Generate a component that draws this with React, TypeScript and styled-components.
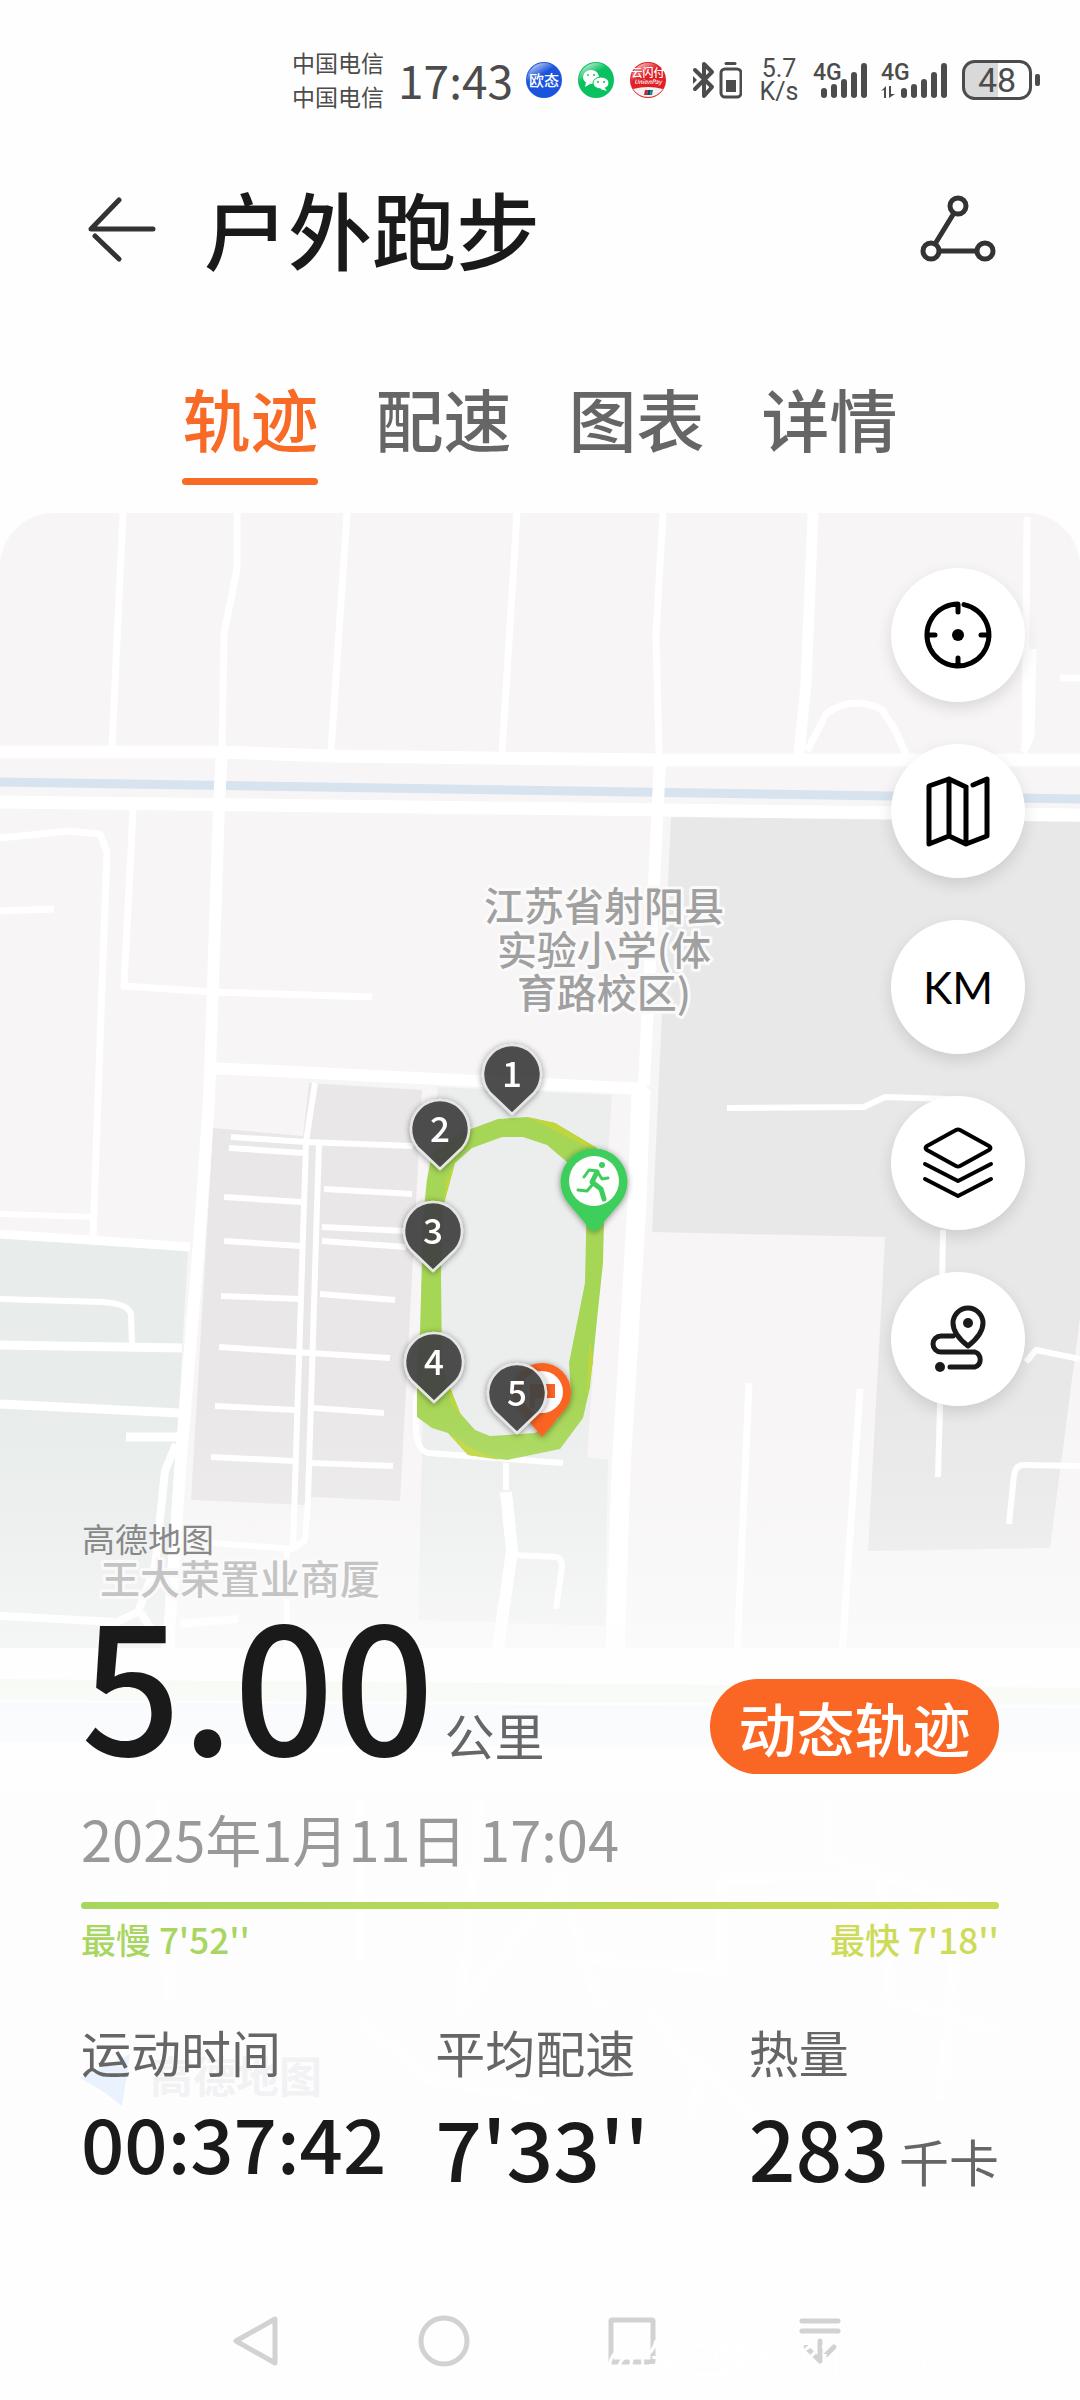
import React from "react";
import styled, { createGlobalStyle } from "styled-components";

const GlobalStyle = createGlobalStyle`
  *, *::before, *::after { box-sizing: border-box; }
  html, body { margin: 0; background: #fefefe; }
  body { font-family: "Noto Sans CJK SC", "Noto Sans", sans-serif; color: #1a1a1a; }
  button { border: 0; padding: 0; background: none; font: inherit; color: inherit; cursor: pointer; }
  svg { display: block; }
  h1, p, dl, dd, dt { margin: 0; font-weight: inherit; }
`;

const Page = styled.div`
  min-height: 100vh;
  display: flex;
  flex-direction: column;
`;

/* ---------- status bar ---------- */

const StatusBar = styled.div`
  height: 160px;
  padding-right: 40px;
  display: flex;
  align-items: center;
  justify-content: flex-end;
  color: #4c4c4c;
`;

const Carriers = styled.div`
  font-size: 23px;
  line-height: 34px;
  font-weight: 400;
  margin-right: 14px;
  padding-bottom: 2px;
`;

const Clock = styled.time`
  font-size: 46px;
  line-height: 48px;
  font-weight: 400;
  margin-right: 13px;
  padding-bottom: 2px;
`;

const Notices = styled.div`
  display: flex;
  gap: 16px;
  margin-right: 26px;
  svg {
    overflow: visible;
  }
`;

const Speed = styled.div`
  width: 40px;
  margin: 0 14px 0 17px;
  text-align: center;
  font: 400 25px/23px Roboto, sans-serif;
`;

const Signals = styled.div`
  display: flex;
  gap: 14px;
  margin-right: 15px;
`;

/* ---------- header and tabs ---------- */

const Header = styled.header`
  height: 140px;
  padding: 0 84px 4px 88px;
  display: flex;
  align-items: center;
  gap: 48px;
`;

const Title = styled.h1`
  flex: 1;
  font-size: 84px;
  line-height: 112px;
  font-weight: 500;
`;

const Tabs = styled.nav`
  display: flex;
  justify-content: center;
  gap: 57px;
  padding: 76px 0 28px;
`;

const Tab = styled.button<{ $active?: boolean }>`
  && {
    color: ${(p) => (p.$active ? "#f86a26" : "#666")};
    font-weight: 500;
  }
  font-size: 68px;
  line-height: 84px;
  &::after {
    content: "";
    display: block;
    height: 7px;
    margin-top: 18px;
    border-radius: 4px;
    background: ${(p) => (p.$active ? "#f86a26" : "transparent")};
  }
`;

/* ---------- map ---------- */

const MapSection = styled.main`
  position: relative;
  flex: 1;
  display: flex;
  flex-direction: column;
  border-radius: 54px 54px 0 0;
  overflow: hidden;
  padding: 55px 81px 0;
`;

const MapLayer = styled.svg`
  position: absolute;
  inset: 0;
  width: 100%;
  height: 100%;
`;

const Tools = styled.div`
  position: relative;
  align-self: flex-end;
  display: flex;
  flex-direction: column;
  gap: 42px;
  margin-right: -26px;
`;

const Tool = styled.button`
  && { background: #fff; }
  width: 134px;
  height: 134px;
  border-radius: 50%;
  display: grid;
  place-items: center;
  box-shadow: 0 6px 16px rgba(0, 0, 0, 0.12);
  color: #000;
  font: 400 44px/1 Lato, sans-serif;
`;

/* ---------- summary ---------- */

const Summary = styled.section`
  position: relative;
  margin-top: 112px;
`;

const Credit = styled.p`
  padding-left: 1px;
  font-size: 33px;
  line-height: 40px;
  color: #888;
`;

const DistanceRow = styled.div`
  display: flex;
  justify-content: space-between;
  align-items: flex-end;
  margin-top: 28px;
`;

const Distance = styled.p`
  font-size: 176px;
  line-height: 188px;
  font-weight: 500;
`;

const Unit = styled.span`
  font-size: 50px;
  line-height: 64px;
  font-weight: 400;
  color: #666;
  margin-left: 10px;
`;

const ReplayButton = styled.button`
  && {
    background: #fa6623;
    color: #fff;
    font-size: 58px;
    font-weight: 500;
  }
  width: 289px;
  height: 95px;
  line-height: 84px;
  border-radius: 48px;
`;

const When = styled.time`
  display: block;
  margin-top: 28px;
  font-size: 56px;
  line-height: 72px;
  color: #999;
`;

const PaceBar = styled.div`
  height: 7px;
  margin-top: 28px;
  border-radius: 4px;
  background: linear-gradient(90deg, #a6d75c, #b8d958 50%, #cbda54);
`;

const PaceEnds = styled.div`
  display: flex;
  justify-content: space-between;
  margin-top: 8px;
  font-size: 35px;
  line-height: 44px;
  font-weight: 500;
`;

const PaceEnd = styled.span<{ $color: string }>`
  color: ${(p) => p.$color};
`;

const Stats = styled.dl`
  display: grid;
  grid-template-columns: 355fr 314fr 249fr;
  margin-top: 58px;
`;

const StatLabel = styled.dt`
  font-size: 50px;
  line-height: 64px;
  color: #666;
`;

const StatValue = styled.dd<{ $long?: boolean }>`
  margin-top: 16px;
  white-space: nowrap;
  font-weight: 500;
  font-size: ${(p) => (p.$long ? 76 : 82)}px;
  line-height: ${(p) => (p.$long ? 84 : 96)}px;
`;

const SystemNav = styled.nav`
  position: relative;
  height: 118px;
  padding-right: 4px;
  display: flex;
  justify-content: center;
  gap: 128px;
  align-items: center;
`;

const Watermark = styled.span`
  position: absolute;
  right: 20px;
  bottom: 20px;
  font-size: 43px;
  line-height: 44px;
  color: #fff;
`;

/* ---------- drawings ---------- */

const Ball = ({ id, color, children }: { id: string; color: string; children: React.ReactNode }) => (
  <svg width="36" height="36" viewBox="0 0 36 36" aria-hidden="true">
    <defs>
      <linearGradient id={id} x1="0.2" y1="0" x2="0.6" y2="0.7">
        <stop offset="0" stopColor="#fff" stopOpacity="0.75" />
        <stop offset="0.5" stopColor="#fff" stopOpacity="0" />
      </linearGradient>
    </defs>
    <circle cx="18" cy="18" r="18" fill={color} />
    {children}
    <circle cx="18" cy="18" r="17" fill={`url(#${id})`} />
  </svg>
);

const ballText = { fill: "#fff", textAnchor: "middle" as const, fontWeight: 500 };

const Bluetooth = () => (
  <svg width="50" height="38" viewBox="0 0 50 38" fill="none" stroke="#4c4c4c" strokeLinecap="round" strokeLinejoin="round" aria-label="蓝牙">
    <path d="M3 9 20 26 12 35V3L20 11 3 28" strokeWidth="4" />
    <path d="M1 15l4 4-4 4z" fill="#4c4c4c" stroke="none" />
    <rect x="29" y="8" width="20" height="28" rx="4" strokeWidth="3" />
    <path d="M34 2.500H43" strokeWidth="3" />
    <rect x="34" y="19" width="10" height="12" fill="#4c4c4c" stroke="none" />
  </svg>
);

const Signal = ({ data }: { data?: boolean }) => (
  <svg width={data ? 66 : 54} height="38" viewBox={data ? "-12 0 66 38" : "0 0 54 38"} aria-label="4G">
    <text x={data ? -12 : 0} y="19" fontFamily="Roboto, sans-serif" fontWeight="500" fontSize="23" fill="#4c4c4c">
      4G
    </text>
    {[[11, 10], [21, 14], [31, 19], [41, 26], [51, 35]].map(([x, h]) => (
      <rect key={x} x={x - 3} y={37 - h} width="6" height={h} rx="3" fill="#4c4c4c" />
    ))}
    {data && <path d="M-12 30l5-5v12h-2v-8zM-4 25h2v8h4l-6 4z" fill="#4c4c4c" />}
  </svg>
);

const Battery = () => (
  <svg width="78" height="40" viewBox="0 0 78 40" aria-label="电量 48">
    <path d="M12 2H36V38H12Q2 38 2 28V12Q2 2 12 2" fill="#d9d9d9" />
    <rect x="1.500" y="1.500" width="67" height="37" rx="11" fill="none" stroke="#4c4c4c" strokeWidth="3" />
    <rect x="73" y="14" width="5" height="12" rx="2" fill="#4c4c4c" />
    <text x="35" y="32" textAnchor="middle" fontFamily="Roboto, sans-serif" fontSize="34" fill="#4c4c4c">
      48
    </text>
  </svg>
);

const line = {
  fill: "none",
  stroke: "currentColor",
  strokeWidth: 5,
  strokeLinecap: "round" as const,
  strokeLinejoin: "round" as const,
};

const ToolIcon = ({ children }: { children: React.ReactNode }) => (
  <svg width="76" height="76" viewBox="-38 -38 76 76" {...line} aria-hidden="true">
    {children}
  </svg>
);

const tools: { label: string; icon: React.ReactNode }[] = [
  {
    label: "定位",
    icon: (
      <ToolIcon>
        <path d="M0 -23V-31A31 31 0 1 0 6 -30.400M-31 0h8M31 0h-8M0 31v-8" />
        <circle r="6" fill="currentColor" stroke="none" />
      </ToolIcon>
    ),
  },
  {
    label: "地图",
    icon: (
      <ToolIcon>
        <path d="M8 -24 -9 -32 -29 -25V33L-9 25 8 33 29 25V-32L15 -26M-9 -32V25M8 -24V33" />
      </ToolIcon>
    ),
  },
  { label: "公里", icon: "KM" },
  {
    label: "图层",
    icon: (
      <ToolIcon>
        <path strokeWidth="4" d="M-2 -33Q0 -34 2 -33L31 -17Q34 -15 31 -13L2 3Q0 4 -2 3L-31 -13Q-34 -15 -31 -17ZM-33 1 0 18 33 1M-33 16 0 33 33 16" />
      </ToolIcon>
    ),
  },
  {
    label: "路线",
    icon: (
      <ToolIcon>
        <path stroke="#1a1a1a" d="M-5 -3H-17A8 8 0 0 0 -17 13H17A8 8 0 0 1 17 28H-8M10 7C1 0 -5 -8 -5 -16A15 15 0 0 1 25 -16C25 -8 19 0 10 7Z" />
        <circle cx="10" cy="-16" r="5" fill="#1a1a1a" stroke="none" />
        <circle cx="-18" cy="28" r="5" fill="#1a1a1a" stroke="none" />
      </ToolIcon>
    ),
  },
];

const roads: { w: number; d: string }[] = [
  { w: 7, d: "M123 513 112 747M237 513V569L224 634 222 747M347 513 331 751M517 513 502 753M663 513 656 634 659 754M1027 517 1025 750M1033 649 1031 737 1023 752M1060 678H1080" },
  { w: 7, d: "M807 751 826 714Q840 703 857 703 873 704 882 710L895 730 906 754" },
  { w: 11, d: "M813 513 806 684 799 754" },
  { w: 13, d: "M0 752H220L330 756 660 760H1080M0 802 1080 815" },
  { w: 12, d: "M222 747 219 806 209 1100 200 1230 180 1471 168 1650M660 760 654 883 644 1085M210 1068 647 1089" },
  { w: 19, d: "M641 1089 637 1203 621 1471 615 1655" },
  { w: 7, d: "M0 838 69 831 100 834 107 852 103 959 93 1237M133 810 124 986 213 992 372 997M0 911 54 909" },
  { w: 6, d: "M727 1108 864 1107 885 1097 950 1099M943 1230 940 1406 938 1477M1026 1362 1036 1350 1080 1359M1009 1524 1014 1475Q1016 1465 1023 1465L1080 1466" },
  { w: 7, d: "M749 1383 737 1655M860 1389 842 1655" },
  { w: 9, d: "M0 1234 90 1240 190 1247M0 1345 182 1348M0 1404 179 1413M126 1437H179" },
  { w: 6, d: "M0 1214 93 1217M0 1299 103 1302Q130 1304 131 1315L132 1345" },
  { w: 8, d: "M176 1444 165 1471 155 1567 138 1612 117 1622 0 1616M141 1613 158 1640M180 1624 238 1619" },
  { w: 6, d: "M315 1083 306 1142 293 1547M319 1142 308 1500 305 1540 293 1549 213 1543M287 1549V1655" },
  { w: 6, d: "M231 1137 306 1142 413 1146M229 1148 303 1153M224 1197 301 1202M324 1189 412 1194M224 1241 301 1246M322 1227 406 1231M322 1241 406 1247M221 1296 300 1299M320 1294 395 1300M219 1347 310 1353 390 1358M215 1406 296 1410M313 1408 384 1413M211 1457 293 1461M311 1463 393 1466" },
  { w: 6, d: "M420 1380 416 1400V1433Q418 1450 428 1453L563 1463M506 1463V1490M513 1555 556 1557Q562 1558 562 1567L556 1609" },
  { w: 12, d: "M506 1492 512 1551 497 1655" },
];

const pins: [number, number, number][] = [
  [1, 512, 1075],
  [2, 440, 1130],
  [3, 433, 1232],
  [4, 434, 1363],
  [5, 517, 1394],
];

const DROP = "M0 39 -22 18A29 29 0 1 1 22 18Z";

const RunMap = () => (
  <MapLayer viewBox="0 513 1080 1769" preserveAspectRatio="xMidYMin slice" role="img" aria-label="跑步轨迹">
    <defs>
      <linearGradient id="fade" gradientUnits="userSpaceOnUse" x1="0" y1="1400" x2="0" y2="1800">
        <stop offset="0" stopColor="#fefefe" stopOpacity="0" />
        <stop offset="0.3" stopColor="#fefefe" stopOpacity="0.2" />
        <stop offset="0.6" stopColor="#fefefe" stopOpacity="0.55" />
        <stop offset="0.78" stopColor="#fefefe" stopOpacity="0.8" />
        <stop offset="1" stopColor="#fefefe" stopOpacity="0.92" />
      </linearGradient>
      <filter id="soft" x="-50%" y="-50%" width="200%" height="200%">
        <feDropShadow dx="0" dy="1" stdDeviation="3" floodColor="#000" floodOpacity="0.45" />
      </filter>
    </defs>
    <path fill="#f7f5f6" d="M0 513H1080V1655H0z" />
    <path fill="#e9e8e9" d="M671 817 1080 822V1318L1050 1548 868 1551 885 1237 652 1232Z" />
    <path fill="#e8eceb" d="M0 1233 188 1250 165 1650H0Z" />
    <path fill="#e9e7e8" d="M213 1128 303 1136 309 1083 422 1090 400 1501 313 1497 305 1505 191 1500Z" />
    <path fill="#eceeed" d="M438 1087 612 1095 587 1457 608 1460 605 1626 418 1620 422 1457 424 1200Z" />
    <path fill="none" stroke="#d7e3ef" strokeWidth="9" d="M0 782 1080 799" />
    <g fill="none" stroke="#fff" strokeLinejoin="round">
      {roads.map((r) => (
        <path key={r.d} strokeWidth={r.w} d={r.d} />
      ))}
    </g>
    <path fill="#fefefe" d="M0 1648H1080V2300H0Z" />
    <path fill="#e7f3e2" d="M0 1679 1080 1688V1705L0 1700Z" />
    <path fill="#e4eefb" d="M0 1702 1080 1708V1752L0 1742Z" />
    <path fill="#f3f4f7" d="M0 1790H1080V2200H0Z" />
    <g fill="none" stroke="#fff" strokeWidth="9">
      <path d="M160 1800 168 2000M360 1800V1960M480 1800 460 2010 560 1880 600 2010M590 1960 720 1970V1880L880 1875 890 2000 1000 2030M830 1800V1860L960 1900 940 2100M360 2020 430 2080 540 2100M650 2010 700 2080 690 2120M700 2060 780 2150" />
    </g>
    <path
      fill="#a6d656"
      fillRule="evenodd"
      d="M498 1119 527 1117 555 1123 597 1148 605 1180 603 1263 598 1310 590 1387 583 1418 560 1449 507 1460 468 1455 448 1433 432 1428 417 1417 417 1353 420 1333 423 1220 427 1180 432 1153 460 1133ZM502 1137 523 1137 547 1145 567 1162 587 1193 585 1283 569 1363 571 1393 557 1420 535 1433 490 1436 475 1430 460 1413 442 1367 441 1273 443 1207 455 1163 472 1148Z"
    />
    <path fill="#bfd63c" d="M527 1117 555 1123 597 1148 585 1146 560 1133ZM455 1163 443 1207 446 1180ZM442 1367 460 1413 468 1424 452 1405ZM448 1433 468 1455 500 1460 475 1450ZM590 1337 593 1362 586 1400Z" />
    <path fill="url(#fade)" d="M0 1400H1080V2300H0Z" />
    <path fill="#e9f2fd" d="M80 2078 130 2054 122 2106 104 2092Z" />
    <text x="150" y="2093" fontSize="43" fontWeight="700" fill="#f2f2f4">高德地图</text>

    <g fontWeight="500" textAnchor="middle" fill="#a0a0a0" stroke="#fbfafa" strokeWidth="6" strokeLinejoin="round" paintOrder="stroke" fontSize="40">
      <text x="604" y="921">江苏省射阳县</text>
      <text x="604" y="965">实验小学(体</text>
      <text x="604" y="1008">育路校区)</text>
      <text x="240" y="1594" fill="#c4c4c4">王大荣置业商厦</text>
    </g>

    <g filter="url(#soft)" transform="translate(542 1392)">
      <path fill="#fb6420" d="M0 45 -20 21A29 29 0 1 1 20 21Z" />
      <circle r="21" fill="#fff" />
      <path fill="#fb6420" d="M-12 -8H13V6H-7V16H-12Z" />
    </g>
    {pins.map(([n, x, y]) => (
      <g key={n} transform={`translate(${x} ${y})`} filter="url(#soft)">
        <path d={DROP} fill="#444" fillOpacity="0.9" stroke="#e6e6e6" strokeWidth="2.500" strokeLinejoin="round" />
        <text y="12" textAnchor="middle" fontSize="35" fontWeight="500" fill="#fff">{n}</text>
      </g>
    ))}
    <g filter="url(#soft)" transform="translate(594 1182)">
      <path fill="#3dce5b" d="M0 49Q-5 48 -10 40L-26 21A33.500 33.500 0 1 1 26 21L10 40Q5 48 0 49Z" />
      <circle r="25" cy="-1" fill="#fff" />
      <circle cx="8" cy="-17" r="3" fill="#3dce5b" />
      <path fill="none" stroke="#3dce5b" strokeWidth="3" strokeLinecap="round" strokeLinejoin="round" d="M-10 -5-5 -12 3 -11 8 -3 14 -4M-16 8-7 9-1 2" />
      <path fill="none" stroke="#3dce5b" strokeWidth="5" strokeLinecap="round" strokeLinejoin="round" d="M3 -10-2 0 7 7 10 17" />
    </g>
  </MapLayer>
);

const navIcon = {
  width: 60,
  height: 60,
  viewBox: "-30 -30 60 60",
  fill: "none",
  stroke: "#d2d2d2",
  strokeWidth: 5,
  strokeLinecap: "round" as const,
  strokeLinejoin: "round" as const,
};

export default function App() {
  return (
    <Page>
      <GlobalStyle />
      <StatusBar>
        <Carriers>
          <div>中国电信</div>
          <div>中国电信</div>
        </Carriers>
        <Clock>17:43</Clock>
        <Notices>
          <Ball id="ballBlue" color="#1c55dd">
            <text x="18" y="24" fontSize="15" {...ballText}>欧态</text>
          </Ball>
          <Ball id="ballGreen" color="#0ac160">
            <ellipse cx="13" cy="15" rx="8" ry="7" fill="#fff" />
            <ellipse cx="23" cy="21" rx="8" ry="6" fill="#fff" stroke="#0ac160" />
            <path d="M8 20l-1 5 5-3zM26 25l3 4-7-2z" fill="#fff" />
            <g fill="#0ac160">
              <circle cx="10" cy="13" r="1" />
              <circle cx="16" cy="13" r="1" />
              <circle cx="20" cy="20" r="1" />
              <circle cx="26" cy="20" r="1" />
            </g>
          </Ball>
          <Ball id="ballRed" color="#e01f26">
            <path d="M3 27Q18 23 33 27A18 18 0 0 1 3 27" fill="#f2f2f2" />
            <path d="M15 28h3l-1 5h-3z" fill="#c22" />
            <path d="M18 28h3l-1 5h-3z" fill="#147" />
            <path d="M21 28h2l-1 5h-2z" fill="#187" />
            <text x="18" y="15" fontSize="11" {...ballText}>云闪付</text>
            <text x="18" y="22" fontSize="6" fontStyle="italic" {...ballText}>UnionPay</text>
          </Ball>
        </Notices>
        <Bluetooth />
        <Speed>
          <div>5.7</div>
          <div>K/s</div>
        </Speed>
        <Signals>
          <Signal />
          <Signal data />
        </Signals>
        <Battery />
      </StatusBar>

      <Header>
        <button aria-label="返回">
          <svg width="68" height="68" viewBox="0 0 68 68" fill="none" stroke="#333" strokeWidth="5" strokeLinecap="round" strokeLinejoin="round">
            <path d="M65 35H3L31 6M7 42 31 65" />
          </svg>
        </button>
        <Title>户外跑步</Title>
        <button aria-label="分享">
          <svg width="76" height="68" viewBox="0 0 76 68" fill="none" stroke="#333" strokeWidth="5">
            <circle cx="38" cy="12" r="8" />
            <circle cx="11" cy="57" r="8" />
            <circle cx="65" cy="57" r="8" />
            <path d="M34 19 15 50M19 57H57" />
          </svg>
        </button>
      </Header>

      <Tabs>
        <Tab $active>轨迹</Tab>
        <Tab>配速</Tab>
        <Tab>图表</Tab>
        <Tab>详情</Tab>
      </Tabs>

      <MapSection>
        <RunMap />
        <Tools>
          {tools.map((t) => (
            <Tool key={t.label} aria-label={t.label}>
              {t.icon}
            </Tool>
          ))}
        </Tools>

        <Summary>
          <Credit>高德地图</Credit>
          <DistanceRow>
            <Distance>
              5.00<Unit>公里</Unit>
            </Distance>
            <ReplayButton>动态轨迹</ReplayButton>
          </DistanceRow>
          <When>2025年1月11日 17:04</When>
          <PaceBar />
          <PaceEnds>
            <PaceEnd $color="#a8d660">最慢 7'52''</PaceEnd>
            <PaceEnd $color="#cddb58">最快 7'18''</PaceEnd>
          </PaceEnds>
          <Stats>
            <div>
              <StatLabel>运动时间</StatLabel>
              <StatValue $long>00:37:42</StatValue>
            </div>
            <div>
              <StatLabel>平均配速</StatLabel>
              <StatValue>7'33''</StatValue>
            </div>
            <div>
              <StatLabel>热量</StatLabel>
              <StatValue>
                283<Unit>千卡</Unit>
              </StatValue>
            </div>
          </Stats>
        </Summary>
      </MapSection>

      <SystemNav>
        <button aria-label="返回键">
          <svg {...navIcon}>
            <path d="M19 -22V22L-20 0Z" />
          </svg>
        </button>
        <button aria-label="主屏幕">
          <svg {...navIcon}>
            <circle r="23" />
          </svg>
        </button>
        <button aria-label="最近任务">
          <svg {...navIcon}>
            <rect x="-21" y="-21" width="42" height="42" rx="1" />
          </svg>
        </button>
        <button aria-label="收起">
          <svg {...navIcon}>
            <path d="M-18 -20H18M-18 -10H18M0 0V19M-14 6 0 20 14 6" />
          </svg>
        </button>
        <Watermark>@笑凹拯拯in house086</Watermark>
      </SystemNav>
    </Page>
  );
}
